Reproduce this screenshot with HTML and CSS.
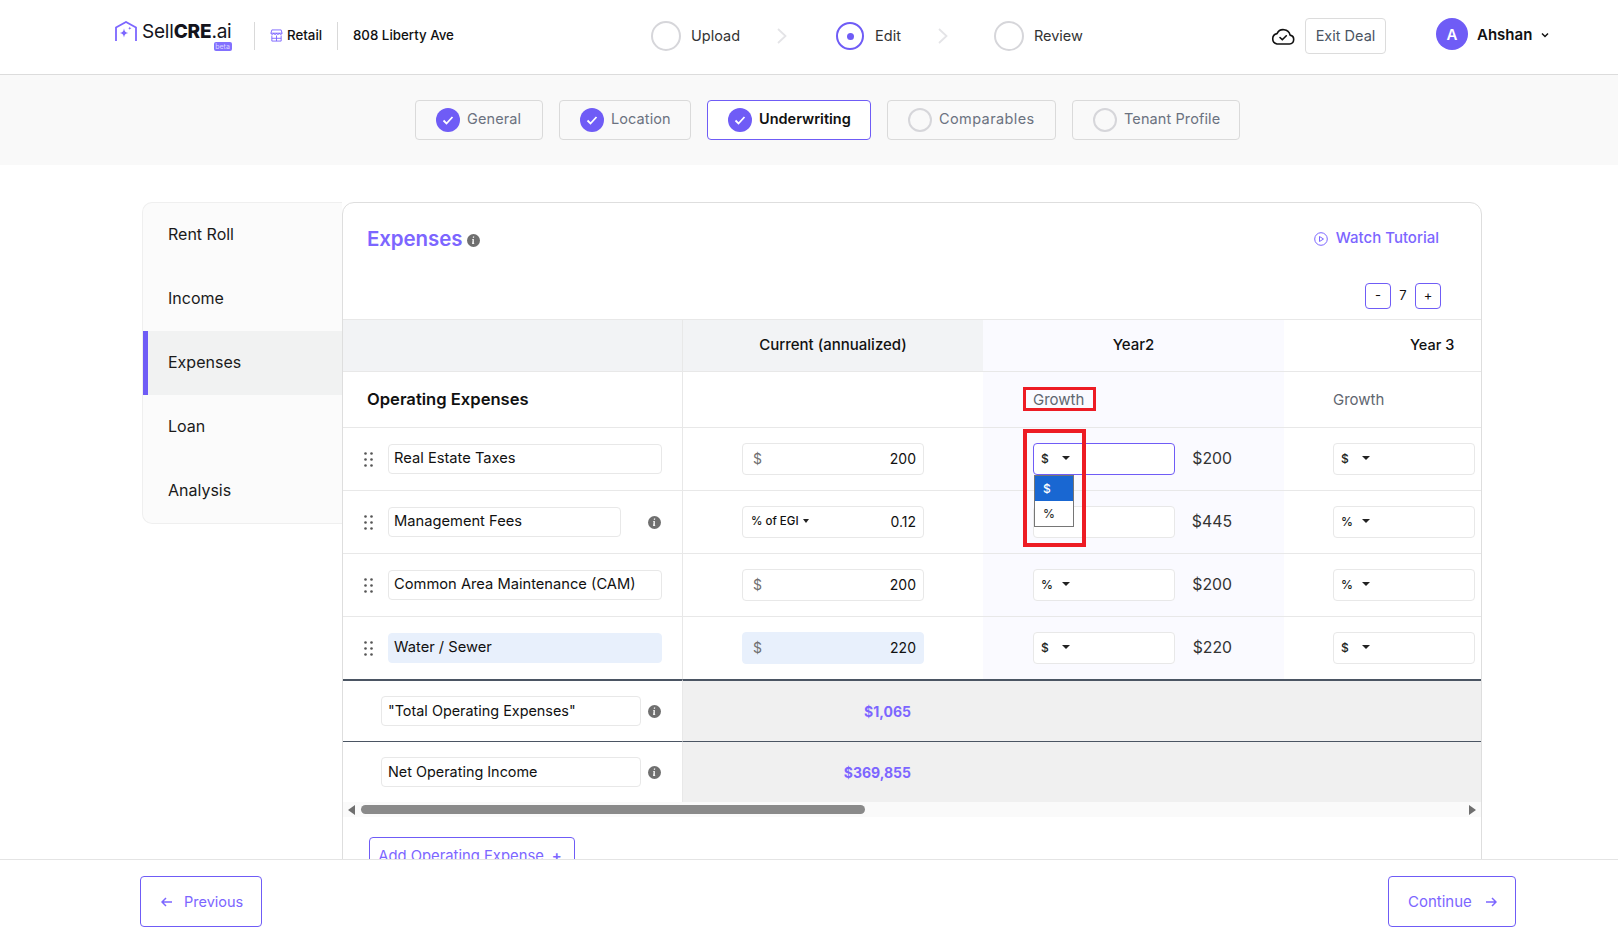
FILE: index.html
```html
<!DOCTYPE html>
<html lang="en">
<head>
<meta charset="utf-8">
<title>SellCRE.ai - Expenses</title>
<link rel="stylesheet" href="styles.css">
</head>
<body>
<header class="topbar">
  <div class="brand">
    <svg class="logo-mark" viewBox="0 0 22 21" fill="none"><path d="M1 20V6.500L11 1l10 5.500V20" stroke="#7c66ff" stroke-width="1.800"/><path d="M9 7.500c.6 3 1.500 3.900 4.200 4.500-2.700.6-3.600 1.500-4.200 4.500-.6-3-1.500-3.900-4.200-4.500 2.700-.6 3.600-1.500 4.200-4.500z" fill="#7c66ff"/><path d="M14.800 5.500c.2 1.200.6 1.600 1.700 1.800-1.100.2-1.500.6-1.700 1.800-.2-1.200-.6-1.600-1.700-1.800 1.100-.2 1.500-.6 1.700-1.800z" fill="#7c66ff"/></svg>
    <div class="wordmark"><span>Sell</span><b>CRE</b><span>.ai</span><i class="beta">beta</i></div>
  </div>
  <div class="crumb retail">
    <svg viewBox="0 0 14 14" fill="none" stroke="#7c66ff" stroke-width="1"><path d="M2 1h10l1 3.500H1z"/><path d="M1 4.500c0 1.800 3 1.800 3 0 0 1.800 3 1.800 3 0 0 1.800 3 1.800 3 0 0 1.800 3 1.800 3 0"/><path d="M2 7v6h10V7M2 10h10M7 7v6"/></svg>
    <span>Retail</span>
  </div>
  <div class="crumb address">808 Liberty Ave</div>
  <nav class="steps">
    <div class="step"><span class="ring"></span><span class="step-label">Upload</span></div>
    <svg class="chev chev-a" viewBox="0 0 10 16" fill="none" stroke="#e4e4e7" stroke-width="1.800"><path d="M1 1l7.500 7L1 15"/></svg>
    <div class="step s-edit"><span class="ring on"><i></i></span><span class="step-label">Edit</span></div>
    <svg class="chev chev-b" viewBox="0 0 10 16" fill="none" stroke="#e4e4e7" stroke-width="1.800"><path d="M1 1l7.500 7L1 15"/></svg>
    <div class="step"><span class="ring"></span><span class="step-label">Review</span></div>
  </nav>
  <div class="actions">
    <svg class="cloud" viewBox="0 0 24 18" fill="none" stroke="#111" stroke-width="1.600" stroke-linejoin="round" stroke-linecap="round"><path d="M6 17h12.500a4.500 4.500 0 0 0 .6-8.900A7 7 0 0 0 6 6.600 5.300 5.300 0 0 0 6 17z"/><path d="M9 10.500l2.300 2.300 4-4"/></svg>
    <button class="exit">Exit Deal</button>
    <div class="avatar">A</div>
    <span class="user">Ahshan</span>
    <svg class="user-chev" viewBox="0 0 8 6" fill="none" stroke="#111" stroke-width="1.500"><path d="M1 1.500l3 3 3-3"/></svg>
  </div>
</header>

<section class="tabband">
  <a class="tab t1"><span class="tick"><svg viewBox="0 0 24 24" fill="none" stroke="#fff" stroke-width="1.800"><path d="M7.500 12.500l3 3 6-6.500"/></svg></span>General</a>
  <a class="tab t2"><span class="tick"><svg viewBox="0 0 24 24" fill="none" stroke="#fff" stroke-width="1.800"><path d="M7.500 12.500l3 3 6-6.500"/></svg></span>Location</a>
  <a class="tab t3 active"><span class="tick"><svg viewBox="0 0 24 24" fill="none" stroke="#fff" stroke-width="1.800"><path d="M7.500 12.500l3 3 6-6.500"/></svg></span>Underwriting</a>
  <a class="tab t4"><span class="blank"></span>Comparables</a>
  <a class="tab t5"><span class="blank"></span>Tenant Profile</a>
</section>

<main class="content">
  <aside class="side">
    <a class="side-item">Rent Roll</a>
    <a class="side-item">Income</a>
    <a class="side-item current">Expenses</a>
    <a class="side-item">Loan</a>
    <a class="side-item">Analysis</a>
  </aside>
  <section class="card">
    <div class="card-head">
      <h1>Expenses</h1>
      <svg class="info big" viewBox="0 0 12 12"><circle cx="6" cy="6" r="6" fill="#6f6f6f"/><path d="M6.700 2.200h-1.200l-.2 1.200h1.200zM6.300 4.700H4.800l-.1.500h.5L4.700 9.300h2l.1-.5h-.5z" fill="#fff"/></svg>
      <a class="tutorial"><svg viewBox="0 0 14 14" fill="none" stroke="#7c66ff" stroke-width="1"><circle cx="7" cy="7" r="6.300"/><path d="M5.500 4.500L9.500 7l-4 2.500z"/></svg>Watch Tutorial</a>
    </div>
    <div class="years">
      <button class="stepper">-</button><span>7</span><button class="stepper">+</button>
    </div>
    <div class="sheet">
      <div class="row head">
        <div class="c0"></div>
        <div class="c1">Current (annualized)</div>
        <div class="c2">Year2</div>
        <div class="c3">Year 3</div>
      </div>
      <div class="row section">
        <div class="c0"><strong>Operating Expenses</strong></div>
        <div class="c1"></div>
        <div class="c2"><span class="growth">Growth</span></div>
        <div class="c3"><span class="growth">Growth</span></div>
      </div>

      <div class="row line">
        <div class="c0">
          <svg class="grip" viewBox="0 0 9 15" fill="#555"><circle cx="1.500" cy="1.500" r="1.300"/><circle cx="7.500" cy="1.500" r="1.300"/><circle cx="1.500" cy="7.500" r="1.300"/><circle cx="7.500" cy="7.500" r="1.300"/><circle cx="1.500" cy="13.500" r="1.300"/><circle cx="7.500" cy="13.500" r="1.300"/></svg>
          <div class="field name">Real Estate Taxes</div>
        </div>
        <div class="c1"><div class="amount"><span class="unit">$</span><span>200</span></div></div>
        <div class="c2">
          <div class="pick focus"><span class="sym">$</span><i class="caret"></i></div>
          <span class="total">$200</span>
        </div>
        <div class="c3"><div class="pick"><span class="sym">$</span><i class="caret"></i></div></div>
      </div>

      <div class="row line">
        <div class="c0">
          <svg class="grip" viewBox="0 0 9 15" fill="#555"><circle cx="1.500" cy="1.500" r="1.300"/><circle cx="7.500" cy="1.500" r="1.300"/><circle cx="1.500" cy="7.500" r="1.300"/><circle cx="7.500" cy="7.500" r="1.300"/><circle cx="1.500" cy="13.500" r="1.300"/><circle cx="7.500" cy="13.500" r="1.300"/></svg>
          <div class="field name short">Management Fees</div>
          <svg class="info" viewBox="0 0 12 12"><circle cx="6" cy="6" r="6" fill="#6f6f6f"/><path d="M6.700 2.200h-1.200l-.2 1.200h1.200zM6.300 4.700H4.800l-.1.500h.5L4.700 9.300h2l.1-.5h-.5z" fill="#fff"/></svg>
        </div>
        <div class="c1"><div class="amount"><span class="egi">% of EGI<i class="caret small"></i></span><span>0.12</span></div></div>
        <div class="c2">
          <div class="pick"><span class="sym">%</span><i class="caret"></i></div>
          <span class="total">$445</span>
        </div>
        <div class="c3"><div class="pick"><span class="sym">%</span><i class="caret"></i></div></div>
      </div>

      <div class="row line">
        <div class="c0">
          <svg class="grip" viewBox="0 0 9 15" fill="#555"><circle cx="1.500" cy="1.500" r="1.300"/><circle cx="7.500" cy="1.500" r="1.300"/><circle cx="1.500" cy="7.500" r="1.300"/><circle cx="7.500" cy="7.500" r="1.300"/><circle cx="1.500" cy="13.500" r="1.300"/><circle cx="7.500" cy="13.500" r="1.300"/></svg>
          <div class="field name">Common Area Maintenance (CAM)</div>
        </div>
        <div class="c1"><div class="amount"><span class="unit">$</span><span>200</span></div></div>
        <div class="c2">
          <div class="pick"><span class="sym">%</span><i class="caret"></i></div>
          <span class="total">$200</span>
        </div>
        <div class="c3"><div class="pick"><span class="sym">%</span><i class="caret"></i></div></div>
      </div>

      <div class="row line">
        <div class="c0">
          <svg class="grip" viewBox="0 0 9 15" fill="#555"><circle cx="1.500" cy="1.500" r="1.300"/><circle cx="7.500" cy="1.500" r="1.300"/><circle cx="1.500" cy="7.500" r="1.300"/><circle cx="7.500" cy="7.500" r="1.300"/><circle cx="1.500" cy="13.500" r="1.300"/><circle cx="7.500" cy="13.500" r="1.300"/></svg>
          <div class="field name fill">Water / Sewer</div>
        </div>
        <div class="c1"><div class="amount fill"><span class="unit">$</span><span>220</span></div></div>
        <div class="c2">
          <div class="pick"><span class="sym">$</span><i class="caret"></i></div>
          <span class="total">$220</span>
        </div>
        <div class="c3"><div class="pick"><span class="sym">$</span><i class="caret"></i></div></div>
      </div>

      <div class="row sum first">
        <div class="c0">
          <div class="field label">"Total Operating Expenses"</div>
          <svg class="info" viewBox="0 0 12 12"><circle cx="6" cy="6" r="6" fill="#6f6f6f"/><path d="M6.700 2.200h-1.200l-.2 1.200h1.200zM6.300 4.700H4.800l-.1.500h.5L4.700 9.300h2l.1-.5h-.5z" fill="#fff"/></svg>
        </div>
        <div class="c1"><span class="figure">$1,065</span></div>
        <div class="c2"></div>
        <div class="c3"></div>
      </div>
      <div class="row sum">
        <div class="c0">
          <div class="field label">Net Operating Income</div>
          <svg class="info" viewBox="0 0 12 12"><circle cx="6" cy="6" r="6" fill="#6f6f6f"/><path d="M6.700 2.200h-1.200l-.2 1.200h1.200zM6.300 4.700H4.800l-.1.500h.5L4.700 9.300h2l.1-.5h-.5z" fill="#fff"/></svg>
        </div>
        <div class="c1"><span class="figure">$369,855</span></div>
        <div class="c2"></div>
        <div class="c3"></div>
      </div>

      <div class="scrollbar">
        <i class="arrow left"></i>
        <div class="track"><div class="thumb"></div></div>
        <i class="arrow right"></i>
      </div>

      <div class="dropdown"><div class="opt sel">$</div><div class="opt">%</div></div>
      <div class="mark mark-growth"></div>
      <div class="mark mark-select"></div>
    </div>
    <button class="add">Add Operating Expense<span>+</span></button>
  </section>
</main>

<footer class="foot">
  <button class="nav prev"><svg viewBox="0 0 12 10" fill="none" stroke="#7c66ff" stroke-width="1.500"><path d="M11 5H1.500M5 1L1 5l4 4"/></svg>Previous</button>
  <button class="nav next"><span>Continue</span><svg viewBox="0 0 12 10" fill="none" stroke="#7c66ff" stroke-width="1.500"><path d="M1 5h9.500M7 1l4 4-4 4"/></svg></button>
</footer>
</body>
</html>
```
FILE: styles.css
```css
* { box-sizing: border-box; }
html, body { margin: 0; height: 100%; }
body {
  display: flex; flex-direction: column; height: 938px; overflow: hidden;
  font-family: Inter, "Noto Sans", sans-serif; color: #111; background: #fff;
}
button { font-family: inherit; cursor: pointer; }

/* top bar */
.topbar { height: 75px; flex: none; display: flex; align-items: center; border-bottom: 1px solid #dcdcdc; padding: 0 0 2px 115px; }
.brand { display: flex; align-items: flex-start; width: 139px; height: 32px; padding-top: 1px; }
.logo-mark { width: 22px; height: 21px; margin-right: 5px; }
.wordmark { position: relative; font-size: 19px; line-height: 22px; letter-spacing: -.2px; color: #14141c; }
.wordmark b { font-weight: 800; }
.beta { position: absolute; right: 0; top: 21px; width: 18px; height: 9px; border-radius: 2px; background: #8270ff; color: #d9d4ff; font-size: 7px; line-height: 9px; text-align: center; font-style: normal; letter-spacing: 0; }
.crumb { height: 28px; display: flex; align-items: center; font-size: 13.300px; font-weight: 500; border-left: 1px solid #d9d9d9; padding-bottom: 2px; }
.retail { width: 83px; padding-left: 15px; gap: 4px; }
.retail svg { width: 13px; height: 13px; }
.address { width: 314px; padding-left: 15px; }
.steps { display: flex; align-items: center; width: 620px; flex: none; font-size: 14.500px; color: #333; }
.step { display: flex; align-items: center; gap: 10px; }
.step-label { padding-bottom: 2px; }
.ring { width: 30px; height: 30px; border: 2px solid #d6d6da; border-radius: 50%; display: flex; align-items: center; justify-content: center; }
.ring.on { width: 28px; height: 28px; border-color: #6f5cf6; }
.ring i { width: 7px; height: 7px; background: #6f5cf6; border-radius: 50%; }
.chev { width: 10px; height: 16px; }
.chev-a { margin: 0 49px 0 37px; }
.chev-b { margin: 0 46px 0 37px; }
.s-edit { gap: 11px; }
.actions { display: flex; align-items: center; }
.cloud { width: 24px; height: 18px; margin-right: 10px; }
.exit { width: 81px; height: 36px; border: 1px solid #dcdcdc; border-radius: 4px; background: #fff; font-size: 14.500px; color: #4b5563; padding: 0 0 2px; }
.avatar { width: 32px; height: 32px; margin: -4px 0 0 50px; border-radius: 50%; background: #6f5cf6; color: #fff; font-weight: 600; font-size: 15px; display: flex; align-items: center; justify-content: center; }
.user { margin: -4px 0 0 9px; font-size: 15px; font-weight: 600; }
.user-chev { width: 8px; height: 6px; margin: -3px 0 0 9px; }

/* tab band */
.tabband { height: 90px; flex: none; background: #f9f9f9; display: flex; gap: 16px; padding: 25px 0 0 415px; }
.tab { height: 40px; display: flex; align-items: center; border: 1px solid #dadada; border-radius: 4px; font-size: 14.500px; letter-spacing: .1px; color: #6b7280; gap: 7px; padding: 0 0 4px 20px; }
.t1 { width: 128px; } .t2 { width: 132px; } .t3 { width: 164px; } .t4 { width: 169px; letter-spacing: .4px; } .t5 { width: 168px; }
.tab.active { background: #fff; border-color: #6f5cf6; color: #111; font-weight: 600; letter-spacing: 0; }
.tick, .blank { width: 24px; height: 24px; border-radius: 50%; flex: none; margin-bottom: -4px; }
.tick { background: #6f5cf6; }
.tick svg { display: block; width: 24px; height: 24px; }
.blank { border: 2px solid #d6d6da; }

/* content */
.content { flex: 1; min-height: 0; overflow: hidden; display: flex; align-items: flex-start; padding: 37px 0 0 142px; }
.side { width: 200px; flex: none; height: 322px; border: 1px solid #efefef; border-right: 0; border-radius: 10px 0 0 10px; background: #fbfbfb; }
.side-item { height: 64px; display: flex; align-items: center; padding: 0 0 2px 25px; font-size: 16px; color: #1a1a1a; }
.side-item.current { background: #f1f2f2; border-left: 5px solid #6f5cf6; padding-left: 20px; }
.card { width: 1140px; flex: none; height: 760px; border: 1px solid #dedede; border-radius: 12px 12px 0 0; background: #fff; }
.card-head { height: 71px; display: flex; align-items: center; padding: 0 42px 0 24px; }
h1 { margin: 0; font-size: 20.500px; font-weight: 600; color: #7c66ff; letter-spacing: -.1px; }
.info { width: 13px; height: 13px; flex: none; }
.info.big { margin: 3px 0 0 5px; }
.tutorial { margin-left: auto; display: flex; align-items: center; gap: 8px; color: #7c66ff; font-size: 15px; font-weight: 500; padding-bottom: 2px; }
.tutorial svg { width: 14px; height: 14px; margin-top: 2px; }
.years { height: 45px; display: flex; align-items: flex-start; justify-content: flex-end; padding: 9px 40px 0 0; font-size: 13px; }
.years span { width: 24px; text-align: center; line-height: 24px; }
.stepper { width: 26px; height: 26px; border: 1px solid #6f5cf6; border-radius: 4px; background: #fff; padding: 0 0 2px; font-size: 13px; color: #111; }

/* sheet */
.sheet { position: relative; }
.row { display: grid; grid-template-columns: 340px 300px 301px 197px; }
.row > div { display: flex; align-items: center; border-top: 1px solid #e8e8e8; }
.c0 { border-right: 1px solid #e8e8e8; padding-left: 21px; gap: 15px; }
.c1 { padding-left: 59px; }
.c2 { background: #fafaff; padding-left: 50px; }
.head { height: 52px; font-size: 15px; font-weight: 500; }
.head > div { padding-bottom: 2px; }
.head .c0, .head .c1 { background: #f2f3f5; }
.head .c1, .head .c2 { padding-left: 0; justify-content: center; }
.head .c3 { padding-left: 126px; font-size: 14.500px; }
.section { height: 56px; }
.section .c0 { padding: 0 0 2px 24px; }
.section .c3, .line .c3 { padding-left: 49px; }
.section strong { font-size: 16.600px; font-weight: 600; }
.growth { font-size: 15px; color: #5f6670; }
.line { height: 63px; }
.field { height: 30px; display: flex; align-items: center; padding: 0 0 2px 5px; border: 1px solid #e8e8e8; border-radius: 4px; font-size: 14.700px; background: #fff; color: #111; white-space: nowrap; }
.name { width: 274px; }
.name.short { width: 233px; margin-right: 12px; }
.fill { background: #e8f0fc !important; border-color: #e8f0fc !important; }
.grip { width: 9px; height: 15px; flex: none; }
.amount { width: 182px; height: 32px; display: flex; align-items: center; justify-content: space-between; padding: 0 7px 2px 10px; border: 1px solid #e8e8e8; border-radius: 4px; font-size: 14px; }
.unit { color: #6f6f6f; }
.egi { font-size: 11.500px; font-weight: 500; margin-left: -2px; display: flex; align-items: center; }
.caret { width: 0; height: 0; border-left: 4px solid transparent; border-right: 4px solid transparent; border-top: 4px solid #222; }
.caret.small { margin-left: 4px; border-left-width: 3.500px; border-right-width: 3.500px; }
.pick { width: 142px; height: 32px; display: flex; align-items: center; padding: 0 0 2px 7px; border: 1px solid #e8e8e8; border-radius: 4px; background: #fff; font-size: 12px; font-weight: 500; color: #222; }
.sym { width: 21px; }
.pick.focus { border-color: #6f5cf6; }
.total { width: 57px; padding-bottom: 2px; text-align: right; font-size: 15.800px; color: #333; }
.sum { height: 61px; }
.sum.first { height: 62px; }
.sum > div { border-top: 1px solid #4b5563; }
.sum.first > div { border-top-width: 2px; }
.sum .c0 { padding-left: 38px; gap: 7px; }
.sum .c1, .sum .c2, .sum .c3 { background: #f0f0f0; }
.sum .c1 { justify-content: flex-end; padding-right: 72px; }
.label { width: 260px; font-size: 14.400px; padding-left: 6px; }
.figure { color: #7c66ff; font-size: 14px; font-weight: 700; }
.scrollbar { height: 15px; display: flex; align-items: center; background: #fafafa; }
.arrow { width: 0; height: 0; border-top: 5px solid transparent; border-bottom: 5px solid transparent; flex: none; }
.arrow.left { border-right: 7px solid #6f6f6f; margin-left: 5px; }
.arrow.right { border-left: 7px solid #6f6f6f; margin-right: 5px; }
.track { flex: 1; padding: 0 6px; }
.thumb { width: 504px; height: 9px; background: #8a8a8a; border-radius: 5px; }

/* overlays */
.dropdown { position: absolute; left: 691px; top: 156px; width: 40px; height: 52px; background: #fff; border: 1px solid #767676; font-size: 12px; font-weight: 500; }
.opt { height: 25px; line-height: 25px; padding-left: 8px; color: #333; }
.opt.sel { background: #1967d2; color: #fff; }
.mark { position: absolute; border: 3px solid #ed1c24; }
.mark-growth { left: 680px; top: 68px; width: 73px; height: 24px; }
.mark-select { left: 680px; top: 110px; width: 63px; height: 118px; border-width: 4px; }

.add { display: block; margin: 20px 0 0 26px; width: 206px; height: 40px; border: 1px solid #6f5cf6; border-radius: 4px; background: #fff; color: #7c66ff; font-size: 14.800px; padding: 0 4px 2px 0; }
.add span { margin-left: 8px; font-weight: 600; }

/* footer */
.foot { height: 79px; flex: none; position: relative; border-top: 1px solid #e4e4e4; background: #fff; display: flex; justify-content: space-between; padding: 16px 102px 0 140px; }
.nav { height: 51px; display: flex; align-items: center; border: 1px solid #6f5cf6; border-radius: 4px; background: #fff; color: #7c66ff; font-size: 14.500px; }
.nav svg { width: 12px; height: 10px; flex: none; }
.prev { width: 122px; padding: 0 0 0 20px; gap: 11px; }
.next { width: 128px; padding: 0 0 0 19px; gap: 13px; font-size: 15px; }
```
